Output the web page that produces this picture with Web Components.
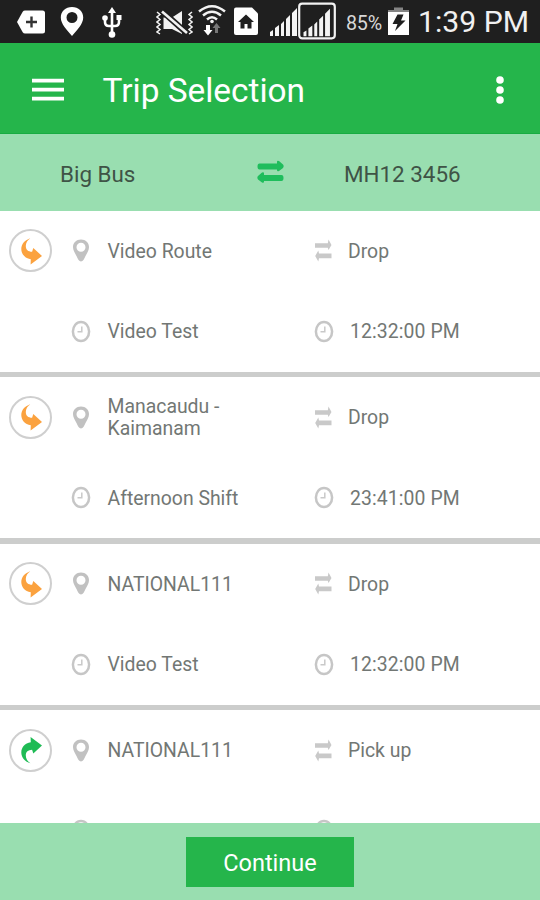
<!DOCTYPE html>
<html lang="en">
<head>
<meta charset="utf-8">
<title>Trip Selection</title>
<style>
  :root {
    --green: #25b54b;
    --mint: #99deb0;
    --text: #727774;
  }
  body {
    margin: 0;
    width: 540px;
    height: 900px;
    overflow: hidden;
    font-family: Roboto, "Liberation Sans", sans-serif;
    background: #fff;
  }
</style>
</head>
<body>
<trip-app></trip-app>

<script>
// Icon shapes: [width, height, markup]
const SIGNAL = `
  <path d="M0 36v-4l3-2v6zM5 36v-8l4-3v11zM11 36V24l3-3v15zM16 36V19l4-4v21zM22 36V13l5-5v28z" fill="#f4f4f4"/>`;

const ARROW = 'M20.500 8.200C15 9.800 11.300 14 11.300 19c0 5 3.500 9.300 9.500 10.200l-.2 5.300L32 26 23.300 18l-1.200 3.800c-4-.2-6.300-2-6.300-5.800 0-3.200 1.800-6 4.700-7.800z';

const ICONS = {
  tag: [28, 43, `
    <path d="M8 10.500h17.500q2.500 0 2.500 2.500v18q0 2.500-2.500 2.500H8q-1.500 0-2.300-1.200L0 22l5.700-10.300Q6.500 10.500 8 10.500z" fill="#fff"/>
    <path d="M14.500 16.500v11M9 22h11" stroke="#333" stroke-width="2.400"/>`],
  place: [24, 43, `
    <path fill-rule="evenodd" fill="#fff" d="M12 7C5.500 7 .8 11.500.8 17.500.800 24 7 30 12 36c5-6 11.200-12 11.200-18.500C23.200 11.500 18.500 7 12 7zm0 5a5.500 5.500 0 1 1 0 11 5.500 5.500 0 0 1 0-11z"/>`],
  usb: [20, 43, `
    <g fill="none" stroke="#fff" stroke-width="2.600">
      <path d="M10 10v24M3 19v3q0 4 4 4h6q4 0 4-4v-3"/>
    </g>
    <path d="M10 7l4 6H6z" fill="#fff"/>
    <circle cx="3" cy="18" r="2.800" fill="#fff"/>
    <path d="M14.500 15h5v5h-5z" fill="#fff"/>
    <circle cx="10" cy="34.500" r="3.300" fill="#fff"/>`],
  vibrate: [37, 43, `
    <g fill="none" stroke="#f2f2f2" stroke-width="1.500">
      <path d="M1 12l3 2.500-3 2.500 3 2.500L1 22l3 2.500L1 27l3 2.500L1 32l3 2M36 12l-3 2.500 3 2.500-3 2.500 3 2.500-3 2.500 3 2.500-3 2.500 3 2.500-3 2"/>
    </g>
    <path d="M7.500 17.500V29H16l10 5V11l-10 6.500z" fill="#f2f2f2"/>
    <path d="M6 11l24 21.500" stroke="#1f1f1f" stroke-width="6"/>
    <path d="M6 11.500l25 21.500" stroke="#f2f2f2" stroke-width="2.600"/>`],
  wifi: [28, 43, `
    <g fill="none" stroke="#f2f2f2" stroke-width="2.500">
      <path d="M1 11.500Q14 1 27 11.500M5 15.500q9-7.500 18 0M9 19.500q5-4.500 10 0"/>
    </g>
    <circle cx="14" cy="21.500" r="1.800" fill="#f2f2f2"/>
    <path d="M8 25h4v5h2.500L10 35.500 5.500 30H8z" fill="#fff"/>
    <path d="M17 33h3v-5h2.500L18.500 23 14.500 28H17z" fill="#777"/>`],
  sim: [24, 43, `
    <path d="M2 7.500h16l6 6V33q0 2-2 2H2q-2 0-2-2V9.500q0-2 2-2z" fill="#fff"/>
    <path d="M12 14.500l8 7.500h-2.500v6.500h-4V24h-3v4.500h-4V22H4z" fill="#1f1f1f"/>`],
  signal: [27, 43, SIGNAL],
  signalBoxed: [38, 43, `
    <rect x="1.200" y="3.700" width="35.600" height="34.600" rx="3" fill="none" stroke="#f2f2f2" stroke-width="2.200"/>
    <g transform="translate(5.500 1) scale(.98)">${SIGNAL}</g>`],
  battery: [21, 43, `
    <path d="M6 7.500h9V10H6zM0 10h21v2.500H0z" fill="#858585"/>
    <path d="M0 12h21v23H0z" fill="#fff"/>
    <path d="M9.500 14.500h6L13 20.500h4.500L7 31l2.500-7H4.500z" fill="#1f1f1f"/>`],
  menu: [32, 24, `<path d="M0 2.700h32M0 11.700h32M0 20.700h32" stroke="#fff" stroke-width="3.700"/>`],
  more: [8, 30, `
    <g fill="#fff"><circle cx="4" cy="5" r="3.800"/><circle cx="4" cy="15" r="3.800"/><circle cx="4" cy="25" r="3.800"/></g>`],
  swap: [27, 24, `
    <g fill="#1fbd5c">
      <path d="M2.500 3.500H20V2q0-2 2-1l4 3.500q1.300 1.700 0 3.400l-4 3q-2 1-2-1V9.500H2.500Q.5 9.500.5 6.500t2-3z"/>
      <path d="M24.500 15H7v-1.500q0-2-2-1L1 16q-1.300 1.700 0 3.400l4 3q2 1 2-1V21h17.500q2 0 2-3t-2-3z"/>
    </g>`],
  swapSmall: [18, 23, `
    <g fill="#c9c9c9">
      <path d="M1 4.200h12.800L14.500.5 17.500 6l-3 5-.7-2.200H1z"/>
      <path d="M17.500 14.500H5l-.7-3L1.200 17l3.100 5.500.7-3.200h12.500z"/>
    </g>`],
  pin: [18, 23, `
    <path fill-rule="evenodd" fill="#c1c1c1" d="M9 .5C4.300.5 1 3.800 1 8c0 3 1.500 5.500 3.500 9C6 20 7 22.500 9 22.500S12 20 13.500 17C15.500 13.500 17 11 17 8 17 3.800 13.700.5 9 .5zm0 3.200a4.500 4.500 0 1 1 0 9 4.500 4.500 0 0 1 0-9z"/>`],
  clock: [20, 23, `
    <ellipse cx="10" cy="11.500" rx="8.100" ry="9.600" fill="none" stroke="#c6c6c6" stroke-width="2.500"/>
    <path d="M10.800 6.500v5.300H6.500" fill="none" stroke="#c9c9c9" stroke-width="1.500"/>`],
  drop: [42, 42, `<path fill="#fba23f" d="${ARROW}"/>`],
  pickup: [42, 42, `<path transform="matrix(1 0 0 -1 0 42.500)" fill="#1fbb55" d="${ARROW}"/>`]
};

class AppIcon extends HTMLElement {
  constructor() {
    super();
    this.attachShadow({ mode: 'open' });
  }

  connectedCallback() {
    const [w, h, markup] = ICONS[this.getAttribute('name')];
    this.shadowRoot.innerHTML = `
      <style>
        :host { display: block; flex: none; width: ${w}px; height: ${h}px; }
        svg { display: block; }
      </style>
      <svg width="${w}" height="${h}" viewBox="0 0 ${w} ${h}">${markup}</svg>
    `;
  }
}

class StatusBar extends HTMLElement {
  constructor() {
    super();
    this.attachShadow({ mode: 'open' }).innerHTML = `
      <style>
        :host {
          display: flex; align-items: center;
          height: 43px; padding-left: 17px;
          background: #1f1f1f; color: #f0f0f0;
          white-space: nowrap;
        }
        .battery { width: 38px; margin: 3px 4px 0 10px; font-size: 19.7px; letter-spacing: -.2px; color: #d8d8d8; }
        .time { margin-left: 9px; font-size: 30.2px; }
      </style>
      <app-icon name="tag"></app-icon>
      <app-icon name="place" style="margin-left: 15px"></app-icon>
      <app-icon name="usb" style="margin-left: 18px"></app-icon>
      <app-icon name="vibrate" style="margin-left: 34px"></app-icon>
      <app-icon name="wifi" style="margin-left: 5px"></app-icon>
      <app-icon name="sim" style="margin-left: 8px"></app-icon>
      <app-icon name="signal" style="margin-left: 12px"></app-icon>
      <app-icon name="signalBoxed" style="margin-left: 1px"></app-icon>
      <span class="battery">85%</span>
      <app-icon name="battery"></app-icon>
      <span class="time">1:39 PM</span>
    `;
  }
}

class AppBar extends HTMLElement {
  constructor() {
    super();
    this.attachShadow({ mode: 'open' }).innerHTML = `
      <style>
        :host {
          display: flex; align-items: center;
          box-sizing: border-box; height: 91px;
          padding: 4px 36.5px 0 31.5px;
          background: var(--green);
          border-bottom: 1px solid #18ac42;
          color: #fff; font-size: 33.4px;
        }
        .title { flex: 1; margin-left: 39px; white-space: nowrap; }
      </style>
      <app-icon name="menu"></app-icon>
      <span class="title"><slot></slot></span>
      <app-icon name="more"></app-icon>
    `;
  }
}

class VehicleBar extends HTMLElement {
  constructor() {
    super();
    this.attachShadow({ mode: 'open' }).innerHTML = `
      <style>
        :host {
          display: grid; grid-template-columns: 197px 87px 1fr; align-items: center;
          box-sizing: border-box; height: 76.5px; padding: 3px 0 0 60px;
          background: var(--mint);
          color: #3f5346; font-size: 22.4px;
        }
        app-icon { margin-bottom: 4px; }
      </style>
      <slot name="vehicle"></slot>
      <app-icon name="swap"></app-icon>
      <slot name="number"></slot>
    `;
  }
}

class TripCard extends HTMLElement {
  constructor() {
    super();
    this.attachShadow({ mode: 'open' });
  }

  set data(value) {
    this._data = value;
    this.render();
  }

  get data() {
    return this._data;
  }

  render() {
    if (!this._data) return;
    const { route, type, shift, time } = this._data;

    this.shadowRoot.innerHTML = `
      <style>
        :host {
          display: grid;
          flex: none;
          grid-template-columns: 62px 45.5px 206px 34.5px 1fr;
          grid-template-rows: 80px 81px 5.5px;
          align-items: center;
          height: 166.5px;
          color: var(--text);
          font-size: 19.4px; line-height: 22px;
        }
        .badge {
          display: flex; justify-content: center;
          box-sizing: border-box; width: 43px; height: 43px; margin-left: 9px;
          border: 2px solid #cfcfcf; border-radius: 50%;
        }
        .badge app-icon { margin-top: -1.5px; }
        .pin { margin-left: 10px; }
        .shift { margin-left: 9px; }
        .route { max-width: 150px; }
        .text { padding-top: 2px; }
        .time { margin-left: 2px; letter-spacing: .1px; }
        .line { grid-column: 1 / -1; height: 100%; background: #cccdcc; }
      </style>
      <div class="badge"><app-icon name="${type === 'Drop' ? 'drop' : 'pickup'}"></app-icon></div>
      <app-icon class="pin" name="pin"></app-icon>
      <div class="text route">${route}</div>
      <app-icon name="swapSmall"></app-icon>
      <div class="text">${type}</div>
      <div></div>
      <app-icon class="shift" name="clock"></app-icon>
      <div class="text">${shift}</div>
      <app-icon name="clock"></app-icon>
      <div class="text time">${time}</div>
      <div class="line"></div>
    `;
  }
}

class BottomBar extends HTMLElement {
  constructor() {
    super();
    this.attachShadow({ mode: 'open' }).innerHTML = `
      <style>
        :host {
          display: flex; align-items: center; justify-content: center;
          height: 77px; background: var(--mint);
        }
        button {
          width: 168px; height: 50px; padding: 3px 0 0;
          border: 0; background: var(--green); color: #fff;
          font: 23.5px Roboto, sans-serif;
        }
      </style>
      <button><slot></slot></button>
    `;
  }
}

class TripApp extends HTMLElement {
  constructor() {
    super();
    this.attachShadow({ mode: 'open' });
    this.trips = [
      { route: 'Video Route', type: 'Drop', shift: 'Video Test', time: '12:32:00 PM' },
      { route: 'Manacaudu - Kaimanam', type: 'Drop', shift: 'Afternoon Shift', time: '23:41:00 PM' },
      { route: 'NATIONAL111', type: 'Drop', shift: 'Video Test', time: '12:32:00 PM' },
      { route: 'NATIONAL111', type: 'Pick up', shift: '', time: '' }
    ];
  }

  connectedCallback() {
    this.shadowRoot.innerHTML = `
      <style>
        :host { display: flex; flex-direction: column; width: 540px; height: 900px; }
        .list { display: flex; flex-direction: column; flex: 1; min-height: 0; overflow: hidden; }
      </style>
      <status-bar></status-bar>
      <app-bar>Trip Selection</app-bar>
      <vehicle-bar>
        <span slot="vehicle">Big Bus</span>
        <span slot="number">MH12 3456</span>
      </vehicle-bar>
      <div class="list"></div>
      <bottom-bar>Continue</bottom-bar>
    `;
    const list = this.shadowRoot.querySelector('.list');
    this.trips.forEach(trip => {
      const card = document.createElement('trip-card');
      card.data = trip;
      list.appendChild(card);
    });
  }
}

customElements.define('app-icon', AppIcon);
customElements.define('status-bar', StatusBar);
customElements.define('app-bar', AppBar);
customElements.define('vehicle-bar', VehicleBar);
customElements.define('trip-card', TripCard);
customElements.define('bottom-bar', BottomBar);
customElements.define('trip-app', TripApp);
</script>
</body>
</html>
